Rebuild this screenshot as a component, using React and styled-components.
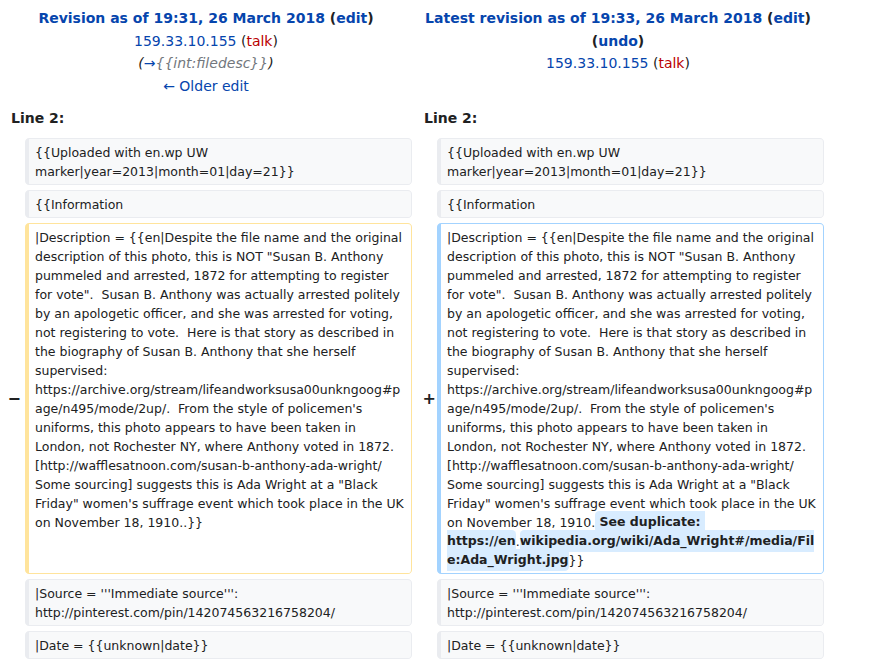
import React from "react";
import styled, { createGlobalStyle } from "styled-components";

const Global = createGlobalStyle`
  html, body { margin: 0; padding: 0; background: #ffffff; }
  body { font-family: "DejaVu Sans", Verdana, sans-serif; color: #202122; }
`;

const Page = styled.div`
  width: 874px;
  padding-top: 7px;
`;

const DiffGrid = styled.div`
  display: grid;
  grid-template-columns: 25px 387px 25px 387px;
  row-gap: 5px;
  align-items: stretch;
`;

const TitleCell = styled.div`
  grid-column: span 2;
  text-align: center;
  font-size: 14px;
  line-height: 22.5px;
  padding: 0 4px;
  margin-bottom: 5px;
`;

const TitleLine = styled.div`
  font-weight: bold;
  color: #0645ad;
`;

const Paren = styled.span`
  color: #202122;
`;

const Link = styled.span`
  color: ${(p) => (p.$red ? "#ba0000" : "#0645ad")};
`;

const Comment = styled.div`
  font-style: italic;
  color: #202122;
`;

const Muted = styled.span`
  color: #72777d;
`;

const LineNo = styled.div`
  grid-column: span 2;
  font-weight: bold;
  font-size: 14px;
  line-height: 22px;
  padding-left: ${(p) => p.$pad || 11}px;
  margin-bottom: 4px;
`;

const Marker = styled.div`
  display: flex;
  align-items: center;
  justify-content: flex-end;
  padding-right: ${(p) => p.$pr || 3}px;
  font-weight: bold;
  font-size: 16px;
  color: #202122;
`;

const Box = styled.div`
  font-family: "DejaVu Sans", Verdana, sans-serif;
  font-size: 12.5px;
  line-height: 19px;
  white-space: pre-wrap;
  overflow-wrap: break-word;
  word-wrap: break-word;
  padding: 3.5px 6px 3.5px 6px;
  border: 1px solid ${(p) => p.$border || "#eaecf0"};
  border-left-width: 4px;
  border-radius: 0.33em;
  background: ${(p) => p.$bg || "#f8f9fa"};
  color: #202122;
`;

const Ins = styled.span`
  font-weight: bold;
  background: #d8ecff;
  border-radius: 0.33em;
  padding: 0.25em 0;
`;

const context = [
  "{{Uploaded with en.wp UW marker|year=2013|month=01|day=21}}",
  "{{Information",
];

const common =
  "|Description = {{en|Despite the file name and the original description of this photo, this is NOT \"Susan B. Anthony pummeled and arrested, 1872 for attempting to register for vote\".  Susan B. Anthony was actually arrested politely by an apologetic officer, and she was arrested for voting, not registering to vote.  Here is that story as described in the biography of Susan B. Anthony that she herself supervised: https://archive.org/stream/lifeandworksusa00unkngoog#page/n495/mode/2up/.  From the style of policemen's uniforms, this photo appears to have been taken in London, not Rochester NY, where Anthony voted in 1872. [http://wafflesatnoon.com/susan-b-anthony-ada-wright/ Some sourcing] suggests this is Ada Wright at a \"Black Friday\" women's suffrage event which took place in the UK on November 18, 1910.";

const after = [
  "|Source = '''Immediate source''': http://pinterest.com/pin/142074563216758204/",
  "|Date = {{unknown|date}}",
];

function ContextRow({ text }) {
  return (
    <>
      <Marker />
      <Box>{text}</Box>
      <Marker />
      <Box>{text}</Box>
    </>
  );
}

export default function App() {
  return (
    <Page>
      <Global />
      <DiffGrid>
        <TitleCell>
          <TitleLine>
            Revision as of 19:31, 26 March 2018 <Paren>(</Paren>edit<Paren>)</Paren>
          </TitleLine>
          <div>
            <Link>159.33.10.155</Link> (<Link $red>talk</Link>)
          </div>
          <Comment>
            (<Link>→</Link>
            <Muted>{"{{int:filedesc}}"}</Muted>)
          </Comment>
          <div>
            <Link>← Older edit</Link>
          </div>
        </TitleCell>
        <TitleCell>
          <TitleLine>
            Latest revision as of 19:33, 26 March 2018 <Paren>(</Paren>edit
            <Paren>)</Paren> <Paren>(</Paren>undo<Paren>)</Paren>
          </TitleLine>
          <div>
            <Link>159.33.10.155</Link> (<Link $red>talk</Link>)
          </div>
        </TitleCell>

        <LineNo $pad={11}>Line 2:</LineNo>
        <LineNo $pad={12}>Line 2:</LineNo>

        {context.map((t) => (
          <ContextRow key={t} text={t} />
        ))}

        <Marker $pr={4}>−</Marker>
        <Box $bg="#ffffff" $border="#ffe49c">
          {common + ".}}"}
        </Box>
        <Marker $pr={1}>+</Marker>
        <Box $bg="#ffffff" $border="#a3d3ff">
          {common}
          <Ins> See duplicate: https://en</Ins>.
          <Ins>wikipedia.org/wiki/Ada_Wright#/media/File:Ada_Wright.jpg</Ins>
          {"}}"}
        </Box>

        {after.map((t) => (
          <ContextRow key={t} text={t} />
        ))}
      </DiffGrid>
    </Page>
  );
}
